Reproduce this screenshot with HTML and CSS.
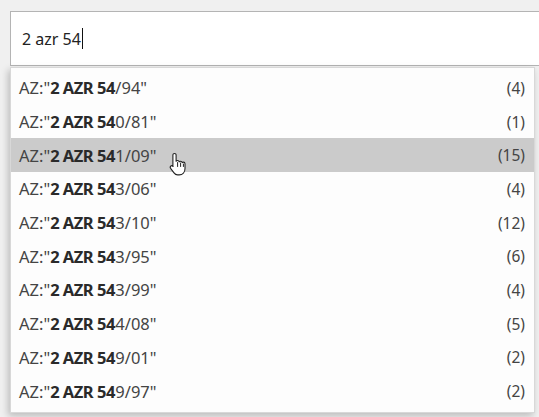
FILE: index.html
```html
<!DOCTYPE html>
<html>
<head>
<meta charset="utf-8">
<link rel="stylesheet" href="styles.css">
</head>
<body>
<div class="page">
  <div class="search">
    <span class="query">2 azr 54</span><span class="caret"></span>
  </div>
  <ul class="menu">
    <li class="item"><span class="label">AZ:"<b>2 AZR 54</b>/94"</span><span class="count">(4)</span></li>
    <li class="item"><span class="label">AZ:"<b>2 AZR 54</b>0/81"</span><span class="count">(1)</span></li>
    <li class="item active"><span class="label">AZ:"<b>2 AZR 54</b>1/09"</span><span class="count">(15)</span>
      <svg class="pointer" width="18" height="24" viewBox="0 0 18 24"><path d="M5.5 1.5c1 0 1.6.7 1.6 1.6v6.2c.3-.5.9-.8 1.5-.8 1 0 1.5.6 1.6 1.3.3-.4.8-.6 1.4-.6.9 0 1.5.6 1.6 1.4.3-.3.7-.5 1.2-.5 1 0 1.6.7 1.6 1.7v4.8c0 3.6-2.4 6.3-5.8 6.3H8.6c-1.6 0-2.7-.8-3.6-2L1.6 16.3c-.6-.9-.4-1.8.3-2.3.7-.5 1.6-.3 2.2.4L3.9 14.5V3.1c0-.9.7-1.6 1.6-1.6z" fill="#fff" stroke="#222" stroke-width="1.1" stroke-linejoin="round"/><path d="M8.6 10.5v4M11.6 11v3.5M14.4 12v2.5" stroke="#222" stroke-width="1" fill="none" stroke-linecap="round"/></svg>
    </li>
    <li class="item"><span class="label">AZ:"<b>2 AZR 54</b>3/06"</span><span class="count">(4)</span></li>
    <li class="item"><span class="label">AZ:"<b>2 AZR 54</b>3/10"</span><span class="count">(12)</span></li>
    <li class="item"><span class="label">AZ:"<b>2 AZR 54</b>3/95"</span><span class="count">(6)</span></li>
    <li class="item"><span class="label">AZ:"<b>2 AZR 54</b>3/99"</span><span class="count">(4)</span></li>
    <li class="item"><span class="label">AZ:"<b>2 AZR 54</b>4/08"</span><span class="count">(5)</span></li>
    <li class="item"><span class="label">AZ:"<b>2 AZR 54</b>9/01"</span><span class="count">(2)</span></li>
    <li class="item"><span class="label">AZ:"<b>2 AZR 54</b>9/97"</span><span class="count">(2)</span></li>
  </ul>
</div>
</body>
</html>
```
FILE: styles.css
```css
html, body {
  margin: 0;
  padding: 0;
  background: #f0f0f0;
  overflow: hidden;
}
.page {
  width: 539px;
  height: 417px;
  padding: 11px 0 0 10px;
  box-sizing: border-box;
  font-family: "Noto Sans", "Open Sans", sans-serif;
  color: #333;
  overflow: hidden;
}
.search {
  width: 529px;
  height: 55px;
  box-sizing: border-box;
  border: 1px solid #b4b4b4;
  border-right: none;
  background: #fff;
  display: flex;
  align-items: center;
  padding-left: 11px;
  font-size: 16px;
  color: #222;
}
.caret {
  display: inline-block;
  width: 1px;
  height: 21px;
  background: #111;
  margin-left: 1px;
}
.menu {
  list-style: none;
  margin: 1px 0 0 0;
  padding: 3px 0 4px 0;
  width: 525px;
  box-sizing: border-box;
  background: #fdfdfd;
  border: 1px solid #d8d8d8;
  box-shadow: -2px 3px 7px rgba(0,0,0,0.22);
}
.item {
  position: relative;
  height: 33.7px;
  display: flex;
  align-items: center;
  justify-content: space-between;
  padding: 0 9px 0 8px;
  font-size: 16.5px;
  color: #444;
}
.item b {
  font-weight: 700;
  color: #2a2a2a;
  letter-spacing: -0.5px;
  margin-right: 0.5px;
}
.item.active {
  background: #cbcbcb;
}
.count {
  font-size: 15.5px;
  color: #444;
}
.pointer {
  position: absolute;
  left: 158px;
  top: 14px;
}
```
